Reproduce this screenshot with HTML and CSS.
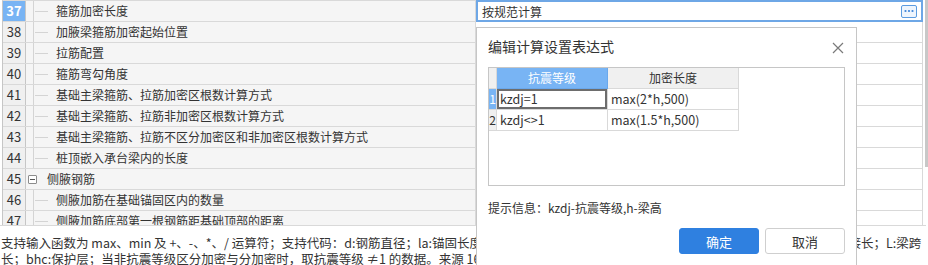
FILE: index.html
```html
<!DOCTYPE html>
<html lang="zh-CN">
<head>
  <meta charset="UTF-8">
  <title>计算设置</title>
  <link rel="stylesheet" href="styles.css">
</head>
<body>
  <!-- Settings grid -->
  <div class="panel">
    <div class="grid">
      <div class="row current">
        <div class="num">37</div>
        <div class="name leaf">箍筋加密长度</div>
        <div class="value">
          <div class="editor">
            <span>按规范计算</span>
            <span class="more">
              <svg width="10" height="4" viewBox="0 0 10 4"><circle cx="1.5" cy="2" r="1.1"/><circle cx="5" cy="2" r="1.1"/><circle cx="8.5" cy="2" r="1.1"/></svg>
            </span>
          </div>
        </div>
      </div>
      <div class="row"><div class="num">38</div><div class="name leaf">加腋梁箍筋加密起始位置</div><div class="value"></div></div>
      <div class="row"><div class="num">39</div><div class="name leaf">拉筋配置</div><div class="value"></div></div>
      <div class="row"><div class="num">40</div><div class="name leaf">箍筋弯勾角度</div><div class="value"></div></div>
      <div class="row"><div class="num">41</div><div class="name leaf">基础主梁箍筋、拉筋加密区根数计算方式</div><div class="value"></div></div>
      <div class="row"><div class="num">42</div><div class="name leaf">基础主梁箍筋、拉筋非加密区根数计算方式</div><div class="value"></div></div>
      <div class="row"><div class="num">43</div><div class="name leaf">基础主梁箍筋、拉筋不区分加密区和非加密区根数计算方式</div><div class="value"></div></div>
      <div class="row"><div class="num">44</div><div class="name leaf">桩顶嵌入承台梁内的长度</div><div class="value"></div></div>
      <div class="row"><div class="num">45</div><div class="name group"><span class="toggle"></span>侧腋钢筋</div><div class="value"></div></div>
      <div class="row"><div class="num">46</div><div class="name leaf">侧腋加筋在基础锚固区内的数量</div><div class="value"></div></div>
      <div class="row"><div class="num">47</div><div class="name leaf">侧腋加筋底部第一根钢筋距基础顶部的距离</div><div class="value"></div></div>
    </div>
    <div class="scrollbar"><div class="thumb"></div></div>
  </div>

  <!-- Hint text -->
  <p class="hint">支持输入函数为 max、min 及 +、-、*、/ 运算符；支持代码：d:钢筋直径；la:锚固长度；lae:抗震锚固长度；hb:梁高度；b:梁宽；ll:搭接长度；lle:抗震搭接长；L:梁跨长；bhc:保护层；当非抗震等级区分加密与分加密时，取抗震等级 ≠1 的数据。来源 16G101-3</p>

  <!-- Expression dialog -->
  <div class="dialog">
    <div class="dialog-head">
      <h3>编辑计算设置表达式</h3>
      <svg class="close" width="12" height="12" viewBox="0 0 12 12"><path d="M1 1L11 11M11 1L1 11"/></svg>
    </div>
    <div class="expr-box">
      <div class="expr-table">
        <div class="rh"></div>
        <div class="th active">抗震等级</div>
        <div class="th">加密长度</div>

        <div class="rh active">1</div>
        <div class="td selected">kzdj=1</div>
        <div class="td">max(2*h,500)</div>

        <div class="rh">2</div>
        <div class="td">kzdj&lt;&gt;1</div>
        <div class="td">max(1.5*h,500)</div>
      </div>
    </div>
    <p class="tip">提示信息：kzdj-抗震等级,h-梁高</p>
    <div class="actions">
      <button class="btn btn-primary">确定</button>
      <button class="btn">取消</button>
    </div>
  </div>
</body>
</html>
```

FILE: styles.css
```css
:root {
  --line: #d9d9d9;
  --border: #c6c6c6;
  --text: #333333;
  --row-bg: #f5f5f5;
  --head-bg: #f0f0f0;
  --light-blue: #78b4f4;
  --blue: #2f80e0;
}

* {
  margin: 0;
  padding: 0;
  box-sizing: border-box;
}

body {
  width: 928px;
  height: 265px;
  overflow: hidden;
  position: relative;
  background: white;
  color: var(--text);
  font-family: "Noto Sans CJK SC", sans-serif;
  font-size: 12px;
}

/* Grid */
.panel {
  display: flex;
  height: 225px;
  margin-left: 2px;
  overflow: hidden;
}

.grid {
  flex: 1;
  border-left: 1px solid var(--border);
  border-right: 1px solid var(--line);
  border-top: 1px solid var(--line);
}

.row {
  display: grid;
  grid-template-columns: 23px 450px 1fr;
  height: 21px;
  border-bottom: 1px solid var(--line);
}

.num {
  background: var(--head-bg);
  border-right: 1px solid var(--border);
  font-size: 13px;
  line-height: 20px;
  text-align: center;
}

.current .num {
  background: var(--light-blue);
  color: white;
  font-weight: bold;
}

.name {
  position: relative;
  background: var(--row-bg);
  border-right: 1px solid var(--line);
  line-height: 20px;
  white-space: nowrap;
  overflow: hidden;
}

.name.leaf {
  padding-left: 30px;
}

.name.leaf:before {
  content: "";
  position: absolute;
  left: 7px;
  top: -1px;
  bottom: -1px;
  border-left: 1px solid #d4d4d4;
}

.name.leaf:after {
  content: "";
  position: absolute;
  left: 9px;
  top: 10px;
  width: 13px;
  border-top: 1px solid #d4d4d4;
}

.name.group {
  display: flex;
  align-items: center;
  padding-left: 2px;
  gap: 10px;
}

.toggle {
  position: relative;
  width: 9px;
  height: 9px;
  border: 1px solid #8c8c8c;
  border-radius: 1px;
  background: white;
}

.toggle:after {
  content: "";
  position: absolute;
  left: 1px;
  top: 3px;
  width: 5px;
  border-top: 1px solid #555;
}

.value {
  position: relative;
  background: white;
}

.editor {
  position: absolute;
  top: -1px;
  bottom: -1px;
  left: 0;
  right: -1px;
  display: flex;
  align-items: center;
  justify-content: space-between;
  padding: 0 4px 0 4px;
  border: 2px solid #6ea7e6;
  background: white;
  font-size: 12px;
}

.more {
  display: flex;
  align-items: center;
  justify-content: center;
  width: 16px;
  height: 13px;
  border: 1px solid #5b9be0;
  border-radius: 2px;
  background: #eef5fd;
  fill: #3c84d8;
}

.scrollbar {
  width: 5px;
}

.thumb {
  width: 3px;
  height: 167px;
  margin-left: 2px;
  background: #c8c8c8;
}

/* Hint text */
.hint {
  width: 926px;
  border-top: 1px solid var(--line);
  padding: 9px 0 0 1px;
  font-size: 12.5px;
  line-height: 16px;
}

/* Dialog */
.dialog {
  position: absolute;
  left: 476px;
  top: 27px;
  width: 381px;
  height: 250px;
  padding: 0 11px 0 11px;
  background: white;
  border: 1px solid var(--border);
}

.dialog-head {
  display: flex;
  justify-content: space-between;
  align-items: center;
  height: 39px;
}

.dialog-head h3 {
  font-size: 14px;
  font-weight: normal;
  line-height: 20px;
  margin-top: -3px;
}

.close {
  margin-right: 1px;
  stroke: #7a7a7a;
  stroke-width: 1.2;
}

.expr-box {
  height: 119px;
  border: 1px solid var(--border);
}

.expr-table {
  display: grid;
  grid-template-columns: 8px 111px 131px;
  grid-auto-rows: 21px;
  width: 250px;
}

.rh,
.th,
.td {
  border-right: 1px solid var(--line);
  border-bottom: 1px solid var(--line);
  line-height: 20px;
  white-space: nowrap;
}

.rh {
  background: var(--head-bg);
  font-size: 12px;
  text-align: center;
}

.th {
  background: var(--head-bg);
  text-align: center;
  font-size: 12px;
}

.rh.active,
.th.active {
  background: var(--light-blue);
  color: white;
}

.th.active {
  border-color: #6aa8ec;
}

.td {
  padding-left: 3px;
  font-size: 12.5px;
}

.td.selected {
  box-shadow: inset 0 0 0 2px #6d6d6d;
}

.tip {
  margin-top: 13px;
  line-height: 18px;
  font-size: 12px;
}

.actions {
  display: flex;
  justify-content: flex-end;
  gap: 6px;
  margin-top: 11px;
}

.btn {
  width: 80px;
  height: 26px;
  border: 1px solid #cfcfcf;
  border-radius: 3px;
  background: white;
  color: var(--text);
  font-family: inherit;
  font-size: 13px;
}

.btn-primary {
  background: var(--blue);
  border-color: var(--blue);
  color: white;
}
```
